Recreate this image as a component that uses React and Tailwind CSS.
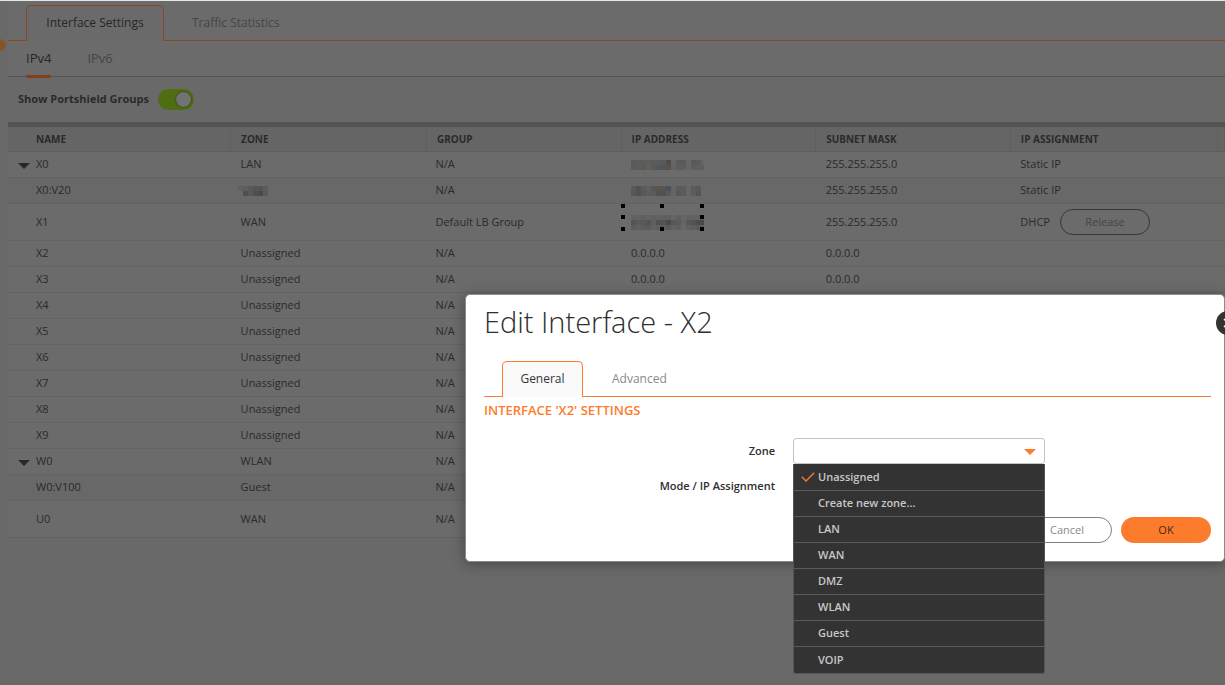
import React from 'react';

const HOSTS = {
  a: [
    ['#5b5a59', '#5c5b5a', '#5e5b58', '#5d5e5f', '#5f5c58', '#585b60', '#565a5e', '#504c4a', '#666666', '#5a5a5a', '#595b5b', '#676767', '#575858', '#5b5a58', '#666666'],
    ['#5c5b58', '#5d5c5a', '#5b5a57', '#5f6061', '#5d5b57', '#53585c', '#525457', '#555350', '#626262', '#5d5d5c', '#5c5f60', '#666666', '#5d5e5e', '#605f5c', '#5d5e60'],
  ],
  b: [
    ['#5b5855', '#545250', '#585b5f', '#5c6064', '#575654', '#585450', '#555453', '#4b5259', '#656565', '#595a5b', '#5a5c5d', '#676767', '#5b5c5c', '#5b5955'],
    ['#595753', '#52504e', '#56585b', '#595d61', '#5c5b59', '#55524e', '#50504f', '#565b60', '#646464', '#575757', '#595b5c', '#666666', '#5c5c5c', '#575552'],
  ],
  c: [
    ['#62615f', '#626262', '#5f5f5f', '#646464', '#5e5f60', '#636363', '#5e5f61', '#62605e', '#666666', '#5e5f60', '#666666', '#636363', '#636261', '#626262', '#5f6062'],
    ['#575553', '#5b5a58', '#5a5755', '#545352', '#5f5f5f', '#4b5259', '#515559', '#4c4a49', '#575859', '#5b5b5b', '#656565', '#5b5653', '#555352', '#4d4c4c', '#44484f'],
    ['#5c5b59', '#605f5e', '#5d5c5a', '#5a5a5a', '#626262', '#5d5f61', '#5c5d5f', '#5a5958', '#626262', '#5e5e5e', '#676767', '#626160', '#5e5d5d', '#5a5958', '#5d5f63'],
  ],
  z: [
    ['#605f5e', '#5f5e5c', '#5a5959', '#575554', '#53545a', '#5c5b5d'],
    ['#696969', '#4f5054', '#595859', '#504f50', '#48484f', '#595a5b'],
  ],
};

function Mosaic({ id, handles }) {
  const grid = HOSTS[id];
  const width = id === 'b' ? 70 : grid[0].length * 5 - (id === 'z' ? 0 : 2);
  return (
    <span className="relative inline-block align-middle">
      <svg
        width={width}
        height={grid.length * 5}
        className="block"
        shapeRendering="crispEdges"
        aria-label="Hidden value"
      >
        {grid.map((row, y) =>
          row.map((c, x) => <rect key={`${x}-${y}`} x={x * 5} y={y * 5} width="5" height="5" fill={c} />)
        )}
      </svg>
      {handles && (
        <svg
          width="83"
          height="27"
          className="absolute -left-[10px] -top-[11px]"
          shapeRendering="crispEdges"
          aria-hidden="true"
        >
          {[[0, 0], [39, 0], [79, 0], [0, 11], [79, 11], [0, 23], [39, 23], [79, 23]].map(([x, y]) => (
            <rect key={`${x}-${y}`} x={x} y={y} width="4" height="4" fill="#000" />
          ))}
        </svg>
      )}
    </span>
  );
}

const rows = [
  { name: 'X0', zone: 'LAN', group: 'N/A', ip: <Mosaic id="a" />, mask: '255.255.255.0', assign: 'Static IP', open: true },
  { name: 'X0:V20', zone: <Mosaic id="z" />, group: 'N/A', ip: <Mosaic id="b" />, mask: '255.255.255.0', assign: 'Static IP', sub: true },
  { name: 'X1', zone: 'WAN', group: 'Default LB Group', ip: <Mosaic id="c" handles />, mask: '255.255.255.0', assign: 'DHCP', release: true, tall: true },
  { name: 'X2', zone: 'Unassigned', group: 'N/A', ip: '0.0.0.0', mask: '0.0.0.0' },
  { name: 'X3', zone: 'Unassigned', group: 'N/A', ip: '0.0.0.0', mask: '0.0.0.0' },
  { name: 'X4', zone: 'Unassigned', group: 'N/A' },
  { name: 'X5', zone: 'Unassigned', group: 'N/A' },
  { name: 'X6', zone: 'Unassigned', group: 'N/A' },
  { name: 'X7', zone: 'Unassigned', group: 'N/A' },
  { name: 'X8', zone: 'Unassigned', group: 'N/A' },
  { name: 'X9', zone: 'Unassigned', group: 'N/A' },
  { name: 'W0', zone: 'WLAN', group: 'N/A', open: true },
  { name: 'W0:V100', zone: 'Guest', group: 'N/A', sub: true },
  { name: 'U0', zone: 'WAN', group: 'N/A', tall: true },
];

const headers = ['NAME', 'ZONE', 'GROUP', 'IP ADDRESS', 'SUBNET MASK', 'IP ASSIGNMENT', ''];
const zones = ['Unassigned', 'Create new zone...', 'LAN', 'WAN', 'DMZ', 'WLAN', 'Guest', 'VOIP'];

function InterfaceTable() {
  return (
    <table className="w-full table-fixed border-collapse border-t-5 border-[#545454] text-left text-[11px] text-[#2a2a2a]">
      <colgroup>
        <col className="w-[18.3%]" />
        <col className="w-[16.1%]" />
        <col className="w-[16%]" />
        <col className="w-[16%]" />
        <col className="w-[16%]" />
        <col className="w-[17%]" />
        <col />
      </colgroup>
      <thead>
        <tr className="h-[27px] border-b border-[#5d5d5d] bg-[#656565]">
          {headers.map((h, i) => (
            <th
              key={i}
              scope="col"
              className={`border-r border-[#5f5f5f] pb-0 pt-px font-bold text-[10px] whitespace-nowrap ${i === 0 ? 'pl-7' : 'pl-[10px]'}`}
            >
              {h}
            </th>
          ))}
        </tr>
      </thead>
      <tbody>
        {rows.map((r) => (
          <tr
            key={r.name}
            className={`border-b border-[#636363] ${r.tall ? 'h-[37px]' : 'h-[26px]'} ${r.sub ? 'bg-[#686868]' : ''}`}
          >
            <td className="p-0">
              <div className="flex items-center">
                <span className="flex w-7 justify-center pl-1">
                  {r.open && (
                    <button type="button" aria-label={`Collapse ${r.name}`} className="pt-[2px]">
                      <svg width="12" height="6" viewBox="0 0 12 6" className="block">
                        <path d="M0 0H12L6 6Z" fill="#282a22" />
                      </svg>
                    </button>
                  )}
                </span>
                {r.name}
              </div>
            </td>
            <td className={r.name === 'X0:V20' ? 'py-0 pl-[7px]' : 'py-0 pl-[10px]'}>{r.zone}</td>
            <td className="py-0 pl-[9px]">{r.group}</td>
            <td className="py-0 pl-[10px]">{r.ip}</td>
            <td className="py-0 pl-[10px]">{r.mask}</td>
            <td className="py-0 pl-[10px]">
              {r.release ? (
                <span className="flex items-center gap-[10px]">
                  {r.assign}
                  <button type="button" className="h-[26px] w-[90px] rounded-full border border-[#373737] text-[#444444]">
                    Release
                  </button>
                </span>
              ) : (
                r.assign
              )}
            </td>
            <td className="p-0" />
          </tr>
        ))}
      </tbody>
    </table>
  );
}

function ZonePicker() {
  return (
    <div className="relative w-[252px]">
      <select
        id="zone"
        defaultValue=""
        className="block h-[26px] w-full appearance-none rounded-[3px] border border-[#c4c4c4] bg-white px-2 outline-none"
      >
        <option value="" />
        {zones.map((z) => (
          <option key={z}>{z}</option>
        ))}
      </select>
      <svg width="12" height="6" viewBox="0 0 12 6" className="pointer-events-none absolute right-[9px] top-[11px]">
        <path d="M0 0H12L6 6Z" fill="#fd7b2d" />
      </svg>
      <ul
        role="listbox"
        aria-label="Zone"
        className="absolute inset-x-0 top-full z-10 rounded-b-[3px] border-x border-b border-[#555555] bg-[#333333] pt-px text-[#c8c8c8]"
      >
        {zones.map((z, i) => (
          <li
            key={z}
            role="option"
            aria-selected={i === 0}
            className="flex h-[26px] items-center border-b border-[#5a5a5a] text-[11px] font-semibold last:border-b-0"
          >
            <span className="flex w-6 justify-center pb-[2px] pl-1">
              {i === 0 && (
                <svg width="14" height="10" viewBox="0 0 14 10" fill="none">
                  <path d="M0.8 4.8L5 9L13.2 0.8" stroke="#fd7b2d" strokeWidth="1.3" />
                </svg>
              )}
            </span>
            {z}
          </li>
        ))}
      </ul>
    </div>
  );
}

function EditDialog() {
  return (
    <section
      role="dialog"
      aria-labelledby="dialog-title"
      className="absolute right-0 top-[293px] w-[760px] rounded-[5px] border border-[#8b8b8b] bg-white pb-[18px] pl-[18px] pr-[13px] shadow-[0_2px_14px_rgba(0,0,0,0.35)]"
    >
      <h1 id="dialog-title" className="pt-2 text-[29px] font-light leading-[38px] text-[#2e2e2e]">
        Edit Interface - X2
      </h1>
      <button
        type="button"
        aria-label="Close"
        className="absolute -right-4 top-4 flex size-6 items-center justify-center rounded-full bg-[#333333]"
      >
        <svg width="10" height="10" viewBox="0 0 10 10">
          <path d="M1 1L9 9M9 1L1 9" stroke="#fff" strokeWidth="1.5" />
        </svg>
      </button>
      <div role="tablist" className="mt-5 flex border-b border-b-[#fd7b2d] pl-[18px] text-[12px]">
        <button
          type="button"
          role="tab"
          aria-selected="true"
          className="-mb-px h-9 w-[81px] rounded-t-[5px] border border-b-0 border-[#fd7b2d] bg-[#fafafa] pb-[2px] text-[#333333]"
        >
          General
        </button>
        <button type="button" role="tab" aria-selected="false" className="h-[35px] px-[29px] text-[#8a8a8a]">
          Advanced
        </button>
      </div>
      <h2 className="pb-px pt-[3px] text-[13px] font-semibold leading-5 text-[#fd7b2d]">INTERFACE 'X2' SETTINGS</h2>
      <form className="pt-[17px] text-[11px] text-[#2e2e2e]" onSubmit={(e) => e.preventDefault()}>
        <div className="flex items-center gap-[18px]">
          <label htmlFor="zone" className="w-[291px] text-right font-semibold">
            Zone
          </label>
          <ZonePicker />
        </div>
        <div className="mt-[9px] flex items-center gap-[18px]">
          <label htmlFor="mode" className="w-[291px] text-right font-semibold">
            Mode / IP Assignment
          </label>
          <select
            id="mode"
            className="block h-[26px] w-[252px] appearance-none rounded-[3px] border border-[#c4c4c4] bg-white px-2"
          />
        </div>
        <div className="mt-[18px] flex justify-end gap-[9px]">
          <button type="button" className="h-[26px] w-[90px] rounded-full border border-[#808080] text-[#8a8a8a]">
            Cancel
          </button>
          <button type="submit" className="h-[26px] w-[90px] rounded-full bg-[#fd7b2d] text-[#4a2a15]">
            OK
          </button>
        </div>
      </form>
    </section>
  );
}

export default function App() {
  return (
    <div className="relative min-h-screen overflow-hidden border-t border-[#e4e8e8] bg-[#696969] pl-2 font-['Open_Sans',sans-serif] text-[#2a2a2a]">
      <span className="absolute -left-[6px] top-[38px] size-3 rounded-full bg-[#85552a]" />
      <main className="bg-[#6b6b6b]">
        <div role="tablist" className="flex border-b border-[#8a4820] pl-[18px] pt-1 text-[12px]">
          <button
            type="button"
            role="tab"
            aria-selected="true"
            className="-mb-px h-9 w-[138px] rounded-t-[5px] border border-b-0 border-[#8a4820] bg-[#6a6a6a] pb-[2px] text-[#272727]"
          >
            Interface Settings
          </button>
          <button type="button" role="tab" aria-selected="false" className="h-[35px] px-7 text-[#454545]">
            Traffic Statistics
          </button>
        </div>
        <nav className="flex h-9 gap-9 border-b border-[#555555] pl-[18px] text-[13px]">
          <a href="#ipv4" className="-mb-[2px] rounded-b-[2px] border-b-3 border-[#843f18] leading-[35px] text-[#272727]">
            IPv4
          </a>
          <a href="#ipv6" className="leading-[35px] text-[#454545]">
            IPv6
          </a>
        </nav>
        <div className="flex h-[45px] items-center gap-[9px] bg-[#696969] pl-[10px] text-[11px] font-bold">
          <label htmlFor="portshield">Show Portshield Groups</label>
          <input
            id="portshield"
            type="checkbox"
            role="switch"
            defaultChecked
            className="h-[21px] w-9 appearance-none rounded-full bg-[#4e6e11] before:ml-[18px] before:mt-[3px] before:block before:size-[15px] before:rounded-full before:bg-[#727272] before:shadow-[0_0_2px_#222] before:content-['']"
          />
        </div>
        <InterfaceTable />
      </main>
      <EditDialog />
    </div>
  );
}
